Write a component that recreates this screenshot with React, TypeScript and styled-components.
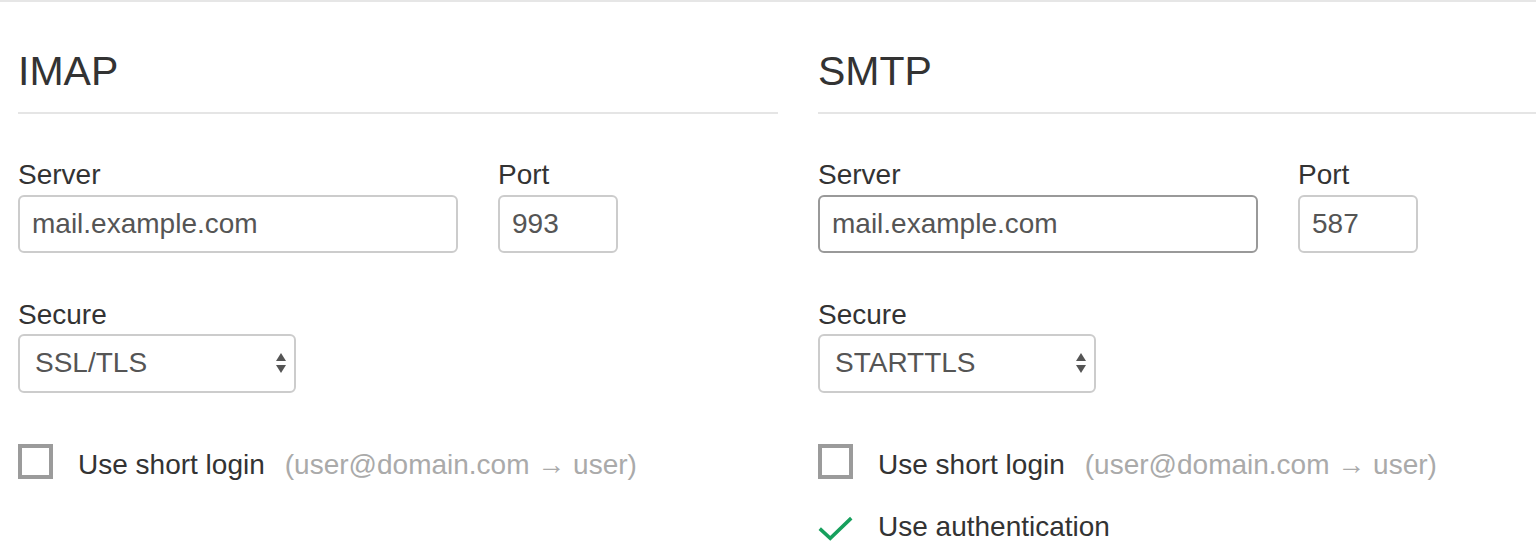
import styled, { createGlobalStyle } from "styled-components";

const GlobalStyle = createGlobalStyle`
  html, body {
    margin: 0;
    padding: 0;
    background: #fff;
  }
  body {
    font-family: "Liberation Sans", Arial, Helvetica, sans-serif;
    color: #333;
  }
`;

type Protocol = {
  title: string;
  server: string;
  port: string;
  secure: string;
  focused?: boolean;
  auth?: boolean;
};

const protocols: Protocol[] = [
  { title: "IMAP", server: "mail.example.com", port: "993", secure: "SSL/TLS" },
  { title: "SMTP", server: "mail.example.com", port: "587", secure: "STARTTLS", focused: true, auth: true },
];

const SelectArrows = () => (
  <ArrowIcon width="12" height="22" viewBox="0 0 12 22">
    <path d="M6 1 L11 9 L1 9 Z" fill="#555" />
    <path d="M1 13 L11 13 L6 21 Z" fill="#555" />
  </ArrowIcon>
);

const ProtocolColumn = ({ data }: { data: Protocol }) => (
  <Column>
    <Heading>{data.title}</Heading>

    <FieldRow>
      <Field>
        <Label>Server</Label>
        <TextInput $width={440} $focused={data.focused} defaultValue={data.server} readOnly />
      </Field>
      <Field>
        <Label>Port</Label>
        <TextInput $width={120} defaultValue={data.port} readOnly />
      </Field>
    </FieldRow>

    <SecureGroup>
      <Label>Secure</Label>
      <SelectWrap>
        <Select defaultValue={data.secure}>
          <option>{data.secure}</option>
        </Select>
        <SelectArrows />
      </SelectWrap>
    </SecureGroup>

    <Options>
      <OptionRow>
        <Slot>
          <CheckBox />
        </Slot>
        <OptionText>Use short login</OptionText>
        <Hint>
          (user@domain.com <Arrow>→</Arrow> user)
        </Hint>
      </OptionRow>
      {data.auth && (
        <OptionRow>
          <Slot>
            <svg width="40" height="40" viewBox="0 0 40 40">
              <path d="M2 23 L14 34 L38 11" fill="none" stroke="#17a05d" strokeWidth="4" />
            </svg>
          </Slot>
          <OptionText>Use authentication</OptionText>
        </OptionRow>
      )}
    </Options>
  </Column>
);

const App = () => {
  return (
    <>
      <GlobalStyle />
      <Page>
        {protocols.map((p) => (
          <ProtocolColumn key={p.title} data={p} />
        ))}
      </Page>
    </>
  );
};

const Page = styled.div`
  border-top: 2px solid #e6e6e6;
  padding-left: 18px;
  display: grid;
  grid-template-columns: 760px 760px;
  column-gap: 40px;
  overflow: hidden;
`;

const Column = styled.div`
  display: flex;
  flex-direction: column;
`;

const Heading = styled.h2`
  margin: 0;
  padding: 46px 0 18px;
  font-size: 41px;
  line-height: 46px;
  font-weight: normal;
  color: #333;
  border-bottom: 2px solid #e5e5e5;
`;

const FieldRow = styled.div`
  display: flex;
  gap: 40px;
  margin-top: 45px;
`;

const Field = styled.div`
  display: flex;
  flex-direction: column;
`;

const Label = styled.label`
  font-size: 28px;
  line-height: 32px;
  color: #333;
  margin-bottom: 4px;
`;

const TextInput = styled.input<{ $width: number; $focused?: boolean }>`
  box-sizing: border-box;
  width: ${(p) => p.$width}px;
  height: 58px;
  padding: 0 12px;
  border: 2px solid ${(p) => (p.$focused ? "#999" : "#ccc")};
  border-radius: 6px;
  font-family: "Liberation Sans", Arial, sans-serif;
  font-size: 28px;
  color: #555;
  background: #fff;
  outline: none;
`;

const SecureGroup = styled.div`
  display: flex;
  flex-direction: column;
  margin-top: 46px;
`;

const SelectWrap = styled.div`
  position: relative;
  width: 278px;
  margin-top: -1px;
`;

const Select = styled.select`
  box-sizing: border-box;
  appearance: none;
  -webkit-appearance: none;
  width: 278px;
  height: 59px;
  padding: 0 40px 3px 15px;
  border: 2px solid #ccc;
  border-radius: 6px;
  background: #fff;
  font-family: "Liberation Sans", Arial, sans-serif;
  font-size: 28px;
  color: #555;
  outline: none;
`;

const ArrowIcon = styled.svg`
  position: absolute;
  right: 9px;
  top: 18px;
  pointer-events: none;
`;

const Options = styled.div`
  display: flex;
  flex-direction: column;
  gap: 27px;
  margin-top: 51px;
`;

const OptionRow = styled.div`
  display: flex;
  align-items: flex-start;
  height: 35px;
`;

const Slot = styled.div`
  width: 35px;
  height: 35px;
  margin-right: 25px;
  display: flex;
  align-items: flex-start;
  overflow: visible;
`;

const CheckBox = styled.span`
  box-sizing: border-box;
  display: block;
  width: 35px;
  height: 35px;
  border: 4px solid #9b9b9b;
  background: #fff;
`;

const OptionText = styled.span`
  font-size: 28px;
  line-height: 41px;
  color: #333;
  white-space: nowrap;
`;

const Hint = styled.span`
  font-size: 28px;
  line-height: 41px;
  color: #aaa;
  margin-left: 20px;
  white-space: nowrap;
`;

const Arrow = styled.span`
  font-family: "Noto Sans", sans-serif;
  font-size: 28px;
  line-height: 1;
`;

export default App;
